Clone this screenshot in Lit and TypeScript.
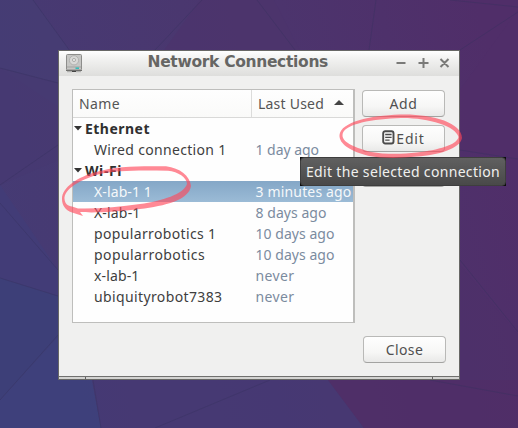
import { LitElement, html, svg, css } from "lit";
import { customElement, property } from "lit/decorators.js";
import { classMap } from "lit/directives/class-map.js";

/** A label whose tracking is adjusted so that it spans a given width. */
@customElement("fit-label")
class FitLabel extends LitElement {
  @property() text = "";
  @property({ type: Number }) span = 0;
  static styles = css`
    :host { display: inline-block; white-space: pre; }
  `;
  render() {
    return html`<span>${this.text}</span>`;
  }
  updated() {
    const el = this.renderRoot.querySelector("span") as HTMLElement;
    el.style.letterSpacing = "0px";
    const natural = el.getBoundingClientRect().width;
    el.style.letterSpacing = `${(this.span - natural) / this.text.length}px`;
  }
}

type Row = { name: string; w: number; used?: string; uw?: number; group?: boolean; selected?: boolean };

const rows: Row[] = [
  { name: "Ethernet", w: 65, group: true },
  { name: "Wired connection 1", w: 132.5, used: "1 day ago", uw: 63.5 },
  { name: "Wi-Fi", w: 37, group: true },
  { name: "X-lab-1 1", w: 58, used: "3 minutes ago", uw: 96, selected: true },
  { name: "X-lab-1", w: 46.5, used: "8 days ago", uw: 71 },
  { name: "popularrobotics 1", w: 122.5, used: "10 days ago", uw: 79 },
  { name: "popularrobotics", w: 111, used: "10 days ago", uw: 79 },
  { name: "x-lab-1", w: 45.5, used: "never", uw: 39 },
  { name: "ubiquityrobot7383", w: 128.5, used: "never", uw: 39 },
];

@customElement("app-root")
class AppRoot extends LitElement {
  static styles = css`
    :host {
      display: block;
      position: relative;
      width: 518px;
      height: 428px;
      overflow: hidden;
      font: 14px/21px "Noto Sans", sans-serif;
      color: #3c3c3c;
    }
    * { box-sizing: border-box; }
    svg { display: block; flex: none; }
    .wallpaper, .marks { position: absolute; inset: 0; }
    .marks { pointer-events: none; }
    .desktop { position: relative; padding: 50px 0 0 58px; }
    .window {
      width: 402px;
      height: 330px;
      border: 1px solid #686866;
      background: #f0f0ef;
      display: flex;
      flex-direction: column;
    }
    .titlebar {
      height: 25px;
      display: flex;
      align-items: center;
      background: linear-gradient(#fff 0, #f4f4f3 25%, #dededc 100%);
      color: #666664;
    }
    .app-icon { margin-left: 7px; }
    .title {
      font: bold 15.5px/23px "DejaVu Sans", sans-serif;
      margin: 0 0 2px 65.5px;
      flex: 1;
    }
    .controls { margin: 0 8px 2px 0; }
    .content { flex: 1; display: flex; padding: 13px 13px 0; }
    .list {
      width: 283px;
      height: 234px;
      border: 1px solid #bebebc;
      border-right-width: 2px;
      background: #fefefe;
    }
    .head {
      display: flex;
      height: 28px;
      line-height: 28px;
      border-bottom: 1px solid #d9d9d8;
      background: linear-gradient(#fefefe, #fafaf9);
      color: #555;
    }
    .col-name { width: 179px; padding-left: 6px; border-right: 1px solid #dcdcdb; }
    .col-used { flex: 1; display: flex; align-items: center; padding-left: 6px; }
    .up { margin: 0 0 3px 10px; }
    .row { display: flex; height: 21px; color: #3e3e3e; }
    .name { width: 182.5px; padding-left: 21px; }
    .used { color: #7b8b9e; white-space: nowrap; }
    .group { font-weight: bold; color: #303030; }
    .group .name { display: flex; padding-left: 1px; }
    .tri { margin: 8px 3px 0 0; }
    .selected { background: linear-gradient(#84a7c7, #9bbbd6); color: #f5f8fa; }
    .selected .used { color: #f5f8fa; }
    .buttons { display: flex; flex-direction: column; margin-left: 7px; width: 83px; }
    .button {
      width: 83px;
      height: 27px;
      flex: none;
      display: flex;
      align-items: center;
      justify-content: center;
      border: 1px solid #b9b9b7;
      border-bottom-color: #a3a3a1;
      border-radius: 4px;
      background: linear-gradient(#fefefe, #f7f7f6 60%, #e9e9e8);
      color: #505050;
      margin-bottom: 8px;
    }
    .button.add { margin-top: 1px; }
    .button.close { margin: 141px 0 0 1px; }
    .note { margin: 0 1px 2px 0; }
    .grip {
      height: 3px;
      display: flex;
      border-top: 1px solid #70706e;
      background: #d3d3d1;
    }
    .grip i { width: 26px; }
    .grip b { flex: 1; border: solid #60605e; border-width: 0 1px; }
    .corners { position: absolute; left: 300px; top: 157px; width: 206px; height: 29px; background: #0c0c0c; }
    .tooltip {
      height: 29px;
      border-radius: 4px;
      border: 1px solid #3e3e3e;
      background: linear-gradient(#606060, #494949);
      color: #f0f0ee;
      line-height: 28px;
      padding-left: 5px;
    }
  `;

  wallpaper() {
    const faces: [string, string][] = [
      ["0,0 33,0 78,62 78,120 0,68", "#463d74"],
      ["0,68 58,83 58,160 0,185", "#473971"],
      ["0,185 0,278 58,296 58,270", "#423e78"],
      ["0,278 58,296 58,337 0,400", "#3b427a"],
      ["0,400 58,337 92,380 101,428 0,428", "#3c437d"],
      ["92,380 328,380 364,428 101,428", "#453a74"],
      ["328,380 518,380 518,428 364,428", "#502d67"],
      ["200,0 274,0 310,70 150,70", "#4c346c"],
      ["460,90 518,10 518,160 460,150", "#502f69"],
      ["460,265 518,335 518,380 460,380", "#4e306a"],
    ];
    const lines = [
      "M0 68L58 83", "M0 185L58 145", "M0 203L58 270", "M0 278L58 296", "M0 400L58 335",
      "M33 0L78 62", "M202 0L155 50", "M257 0L295 50", "M376 0L369 50",
      "M460 50L518 12", "M450 0L518 7", "M460 150L518 159", "M460 260L518 332",
      "M93 380L101 428", "M155 428L270 380", "M430 380L518 396",
    ];
    return html`<svg class="wallpaper" width="518" height="428">
      <defs>
        <linearGradient id="base" x1="0" y1="0.6" x2="1" y2="0.4">
          <stop offset="0" stop-color="#453b74" /><stop offset=".45" stop-color="#4a376f" />
          <stop offset="1" stop-color="#502e69" />
        </linearGradient>
      </defs>
      <rect width="518" height="428" fill="url(#base)" />
      ${faces.map(([p, f]) => svg`<polygon points=${p} fill=${f} opacity=".75" />`)}
      ${lines.map((d) => svg`<path d=${d} stroke="#36315f" stroke-opacity=".4" fill="none" />`)}
    </svg>`;
  }

  row(r: Row) {
    return html`<div class=${classMap({ row: true, group: !!r.group, selected: !!r.selected })}>
      <div class="name">
        ${r.group ? html`<svg class="tri" width="8" height="5"><path d="M0 0H8L4 4.5Z" fill="#333" /></svg>` : ""}
        <fit-label .text=${r.name} .span=${r.w}></fit-label>
      </div>
      <div class="used">${r.used ? html`<fit-label .text=${r.used} .span=${r.uw!}></fit-label>` : ""}</div>
    </div>`;
  }

  render() {
    return html`
      ${this.wallpaper()}
      <div class="desktop">
        <div class="window">
          <div class="titlebar">
            <svg class="app-icon" width="16" height="19" viewBox="0 0 16 19">
              <rect x=".5" y=".5" width="15" height="15.5" rx="1" fill="#c6c6c4" stroke="#8d8d8b" />
              <circle cx="8" cy="6.3" r="4.6" fill="#d9d9d7" stroke="#ababa9" stroke-width=".8" />
              <circle cx="8" cy="6" r="1.6" fill="#e6e6e4" stroke="#a2a2a0" stroke-width=".8" />
              <path d="M1 13H15" stroke="#a3a3a1" />
              <path d="M9.5 14.2H13" stroke="#35bcb9" stroke-width="1.6" />
              <path d="M0 16.5H16" stroke="#6f6f6d" /><path d="M6 17.5H10" stroke="#444" />
              <path d="M1 17.7H6M10 17.7H15" stroke="#a5a5a3" />
            </svg>
            <div class="title"><fit-label .text=${"Network Connections"} .span=${180.5}></fit-label></div>
            <svg class="controls" width="56" height="16" viewBox="0 0 56 16" fill="none" stroke="#7a7a78" stroke-width="2">
              <path d="M1.5 8H10.5M23.5 8H33.5M28.5 3V13M45.5 4L53.5 12M53.5 4L45.5 12" />
            </svg>
          </div>
          <div class="content">
            <div class="list">
              <div class="head">
                <div class="col-name"><fit-label .text=${"Name"} .span=${41}></fit-label></div>
                <div class="col-used">
                  <fit-label .text=${"Last Used"} .span=${66}></fit-label>
                  <svg class="up" width="10" height="5"><path d="M0 5H10L5 0Z" fill="#444" /></svg>
                </div>
              </div>
              ${rows.map((r) => this.row(r))}
            </div>
            <div class="buttons">
              <div class="button add"><fit-label .text=${"Add"} .span=${28}></fit-label></div>
              <div class="button">
                <svg class="note" width="13" height="15" viewBox="0 0 13 15" fill="none" stroke="#4b4b4b">
                  <rect x="1.2" y="1.2" width="10.3" height="12.3" rx="2" stroke-width="1.9" />
                  <path d="M3.2 4.5H9.6M3.2 7.3H9.6M3.2 10.1H7.6" stroke-width="1.3" />
                </svg>
                <fit-label .text=${"Edit"} .span=${28.5}></fit-label>
              </div>
              <div class="button"></div>
              <div class="button close"><fit-label .text=${"Close"} .span=${37.5}></fit-label></div>
            </div>
          </div>
          <div class="grip"><i></i><b></b><i></i></div>
        </div>
      </div>
      <div class="corners"><div class="tooltip"><fit-label .text=${"Edit the selected connection"} .span=${194}></fit-label></div></div>
      <svg class="marks" width="518" height="428" fill="#ff4659" fill-opacity=".64">
        <path fill-rule="evenodd" d="M83 216L72 212.5C65 210 62 205 62 199C62 187 78 177 96 172C116 166 140 166 166 166.3C180 168 190 176 191 186C189 200 165 206 140 209C116 212 93 213 80 212ZM78 208.5C98 209 120 207 140 204C162 201 184 194 187 184C187 178 178 171.5 168 170.8C140 170.5 118 170 98 174.5C80 180 64 189 64.5 199C65 204 68 206 72 206.5Z" />
        <path fill-rule="evenodd" d="M369 156C350 151 339 144 339.5 135C341 122 370 115.500 400 114.500C430 113.500 462 122 462 138C460 149 438 155 417 156.500C400 158.500 382 158.500 369 156ZM371 152C385 154.500 402 154.300 417 152.500C438 150 457 145 458.500 137C456 126 427 117.500 401 118C374 119 343 123.500 342.500 135C342 143 357 148 371 152Z" />
      </svg>`;
  }
}
